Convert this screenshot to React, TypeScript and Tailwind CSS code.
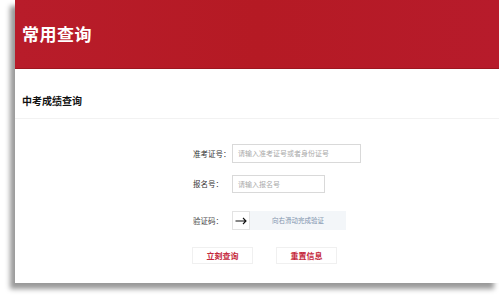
export default function App() {
    const font = { fontFamily: '"Noto Sans CJK SC", "Noto Sans", sans-serif' };

    return (
        <div className="w-[499px] h-[300px] bg-white overflow-hidden" style={font}>
            <div className="ml-[15px] w-[484px] h-[283px] bg-white flex flex-col shadow-[-5px_6px_5px_rgba(0,0,0,0.4)]">
                <div className="h-[69px] bg-gradient-to-r from-[#b81c2a] via-[#b51a24] to-[#b71b2b] border-b border-[#9e1620] flex items-center pl-[7px] pb-[2px]">
                    <h1 className="text-[17px] font-bold text-white leading-none tracking-[0.5px]">常用查询</h1>
                </div>

                <div className="h-[50px] border-b border-[#f2f2f2] pl-[7px] pt-[27px]">
                    <h2 className="text-[10px] font-bold text-[#111] leading-none">中考成绩查询</h2>
                </div>

                <div className="flex flex-col pl-[178px] pt-[25px]">
                    <div className="flex items-center h-[19px]">
                        <span className="w-[39px] text-[7.5px] text-[#333]">准考证号：</span>
                        <div className="w-[129px] h-[19px] border border-[#d9d9d9] flex items-center px-[5px] text-[7px] text-[#aaa]">
                            请输入准考证号或者身份证号
                        </div>
                    </div>

                    <div className="flex items-center h-[18px] mt-[12px]">
                        <span className="w-[39px] text-[7.5px] text-[#333]">报名号：</span>
                        <div className="w-[93px] h-[18px] border border-[#d9d9d9] flex items-center px-[5px] text-[7px] text-[#aaa]">
                            请输入报名号
                        </div>
                    </div>

                    <div className="flex items-center h-[19px] mt-[18px]">
                        <span className="w-[39px] text-[7.5px] text-[#444]">验证码：</span>
                        <div className="flex h-[19px]">
                            <div className="w-[18px] h-[19px] border border-[#e3e3e3] bg-white flex items-center justify-center">
                                <svg width="12" height="8" viewBox="0 0 12 8" fill="none" stroke="#111" strokeWidth="1.1">
                                    <path d="M0.5 4H11M8 1L11 4L8 7" />
                                </svg>
                            </div>
                            <div className="w-[96px] h-[19px] bg-[#f3f6f9] flex items-center justify-center text-[6.5px] text-[#7f93ad]">
                                向右滑动完成验证
                            </div>
                        </div>
                    </div>

                    <div className="flex gap-[23px] mt-[17px] -ml-[1px]">
                        <button className="w-[61px] h-[17px] border border-[#f0f0f0] bg-white text-[8px] font-bold text-[#c52a3d] leading-none">
                            立刻查询
                        </button>
                        <button className="w-[61px] h-[17px] border border-[#f0f0f0] bg-white text-[8px] font-bold text-[#c52a3d] leading-none">
                            重置信息
                        </button>
                    </div>
                </div>
            </div>
        </div>
    );
}
